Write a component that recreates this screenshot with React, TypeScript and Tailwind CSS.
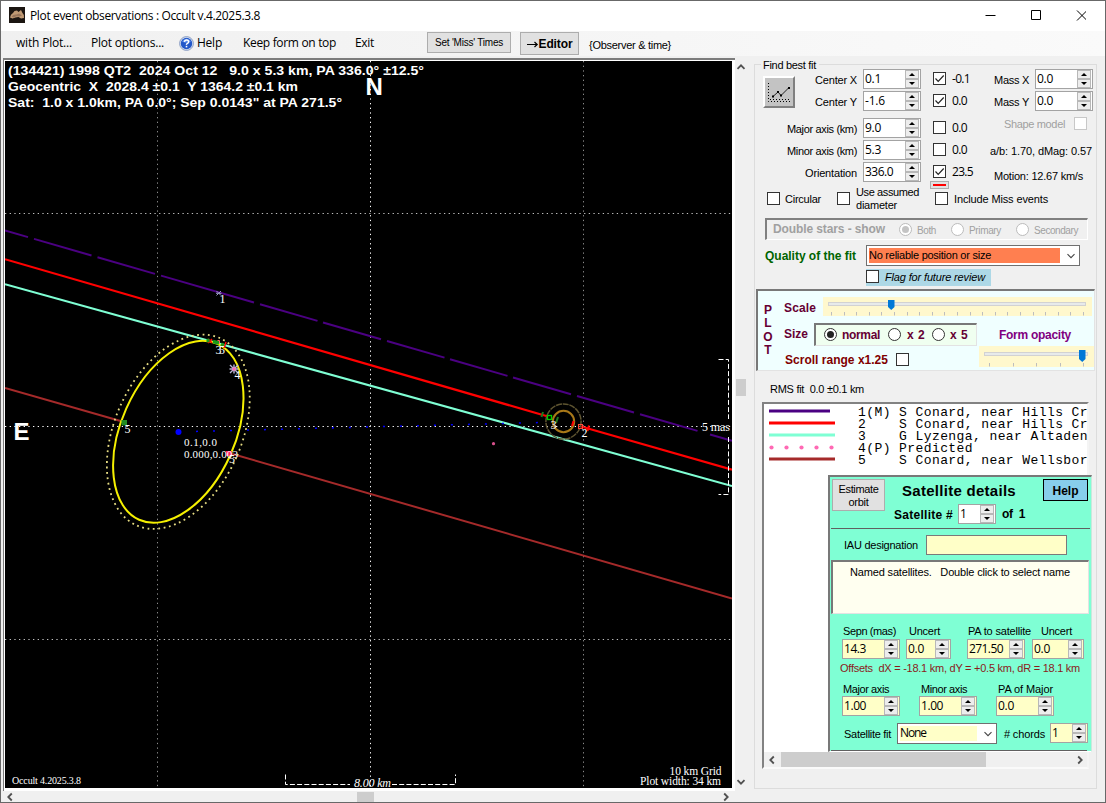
import { useLayoutEffect, useRef, type ReactNode } from "react";

/* Single-line label whose letter spacing is adjusted so it fills its box. */
function Fit({ className = "", small = true, children }: { className?: string; small?: boolean; children: ReactNode }) {
  const box = useRef<HTMLSpanElement>(null);
  const inner = useRef<HTMLSpanElement>(null);
  useLayoutEffect(() => {
    const b = box.current, i = inner.current;
    if (!b || !i) return;
    i.style.letterSpacing = "0px";
    const n = (i.textContent || "").length;
    if (n > 0) i.style.letterSpacing = `${(b.clientWidth - i.getBoundingClientRect().width) / n}px`;
  }, []);
  return (
    <span ref={box} className={`block shrink-0 whitespace-pre leading-[14px] ${small ? "text-[11px]" : ""} ${className}`}>
      <span ref={inner}>{children}</span>
    </span>
  );
}

const UI = "font-['Open_Sans','Noto_Sans',sans-serif]";

function Arrows() {
  return (
    <span className="mr-px flex w-[14px] shrink-0 flex-col">
      {["M3 5h6L6 2z", "M3 2h6L6 5z"].map((d) => (
        <span key={d} className="flex h-[9px] items-center justify-center border border-[#b8b8b8] bg-[#ededed]">
          <svg width="12" height="7" viewBox="0 0 12 7"><path d={d} fill="#000" /></svg>
        </span>
      ))}
    </span>
  );
}

function Spin({ className, value, vw }: { className: string; value: string; vw: string }) {
  return (
    <span className={`flex h-[20px] shrink-0 justify-between border border-[#a3a3a3] ${className}`}>
      <Fit small={false} className={`ml-px mt-[2px] text-[12px] ${UI} ${vw}`}>{value}</Fit>
      <Arrows />
    </span>
  );
}

function Check({ className = "", on, off }: { className?: string; on?: boolean; off?: boolean }) {
  return (
    <span className={`block size-[13px] shrink-0 border bg-white ${off ? "border-[#c8c8c8]" : "border-[#333]"} ${className}`}>
      {on && (
        <svg width="11" height="11" viewBox="0 0 11 11" className="block">
          <path d="M1.5 5.5l2.7 2.8L9.7 2.5" fill="none" stroke="#222" strokeWidth="1.2" />
        </svg>
      )}
    </span>
  );
}

function Radio({ className = "", on, off }: { className?: string; on?: boolean; off?: boolean }) {
  return (
    <span className={`flex size-[13px] shrink-0 items-center justify-center rounded-full border bg-white ${off ? "border-[#bcbcbc]" : "border-[#333]"} ${className}`}>
      {on && <span className={`size-[7px] rounded-full ${off ? "bg-[#c4c4c4]" : "bg-[#222]"}`} />}
    </span>
  );
}

function Chevron({ d, className = "" }: { d: string; className?: string }) {
  return (
    <svg width="10" height="10" viewBox="0 0 10 10" className={`block shrink-0 ${className}`}>
      <path d={d} fill="none" stroke="#505050" strokeWidth="1.8" />
    </svg>
  );
}
const UP = "M1.5 6.8L5 3.3l3.5 3.5";
const DOWN = "M1.5 3.2L5 6.7l3.5-3.5";
const LEFT = "M6.8 1.5L3.3 5l3.5 3.5";
const RIGHT = "M3.2 1.5L6.7 5l-3.5 3.5";

function TrackBar({ className, w, h, ticks, start, step, thumb, y0 }: {
  className: string; w: number; h: number; ticks: number; start: number; step: number; thumb: number; y0: number;
}) {
  return (
    <div className={`shrink-0 bg-[#fff8cd] ${className}`}>
      <svg width={w} height={h} viewBox={`0 0 ${w} ${h}`} className="block">
        <rect x="5.5" y={y0 + 0.5} width={w - 12} height="3" fill="#e7eaea" stroke="#d2d2d2" />
        {Array.from({ length: ticks }, (_, i) => (
          <rect key={i} x={Math.round(start + i * step)} y={h - 4} width="1" height="3.5" fill="#bdbdbd" />
        ))}
        <path d={`M${thumb} ${y0 - 2}h6.500v${h > 19 ? 9 : 7}l-3.250 3l-3.250 -3z`} fill="#0078d7" />
      </svg>
    </div>
  );
}

function TitleBar() {
  return (
    <header className="flex h-[30px] shrink-0 bg-white">
      <svg width="16" height="16" viewBox="0 0 16 16" className="ml-[8px] mt-[6px] block">
        <rect width="16" height="16" fill="#1b1511" />
        <path d="M1 10.500Q1.500 7 4 6L5.500 4l2.500-.5 1.500 1.500 2.500-2 1.500 3Q15.500 7.500 15 11l-3 .5-2.500-1.500-3 .500-3 1z" fill="#c09a74" />
        <path d="M2.500 9.500q2-2.500 5-2l2.500-1 3 2-2.500 1-3-.300-3 1.300z" fill="#98755a" />
      </svg>
      <Fit small={false} className={`ml-[5px] mt-[8px] w-[230px] text-[12px] text-black ${UI}`}>Plot event observations : Occult v.4.2025.3.8</Fit>
      <svg width="106" height="20" viewBox="980 5 106 20" className="ml-[720px] mt-[4px] block" fill="none" stroke="#000" strokeWidth="1">
        <path d="M985.500 15.500h10M1031.500 10.500h9v9h-9zM1077 10.500l10 10M1087 10.500l-10 10" />
      </svg>
    </header>
  );
}

function MenuBar() {
  const m = `mt-[5px] text-[12px] ${UI}`;
  return (
    <nav className="flex h-[25px] shrink-0 bg-gradient-to-r from-[#f0f0f0] to-[#fafafa] text-black">
      <Fit small={false} className={`ml-[15px] w-[56px] ${m}`}>with Plot...</Fit>
      <Fit small={false} className={`ml-[19px] w-[73px] ${m}`}>Plot options...</Fit>
      <svg width="15" height="15" viewBox="0 0 15 15" className="ml-[15px] mt-[5px] block shrink-0">
        <circle cx="7.500" cy="7.500" r="6.900" fill="#dce6f5" stroke="#7f93bc" strokeWidth=".9" />
        <circle cx="7.500" cy="7.500" r="5.700" fill="#2257c8" />
        <path d="M3 5.500A5 5 0 0 1 12 5.500Q7.500 8 3 5.500z" fill="#5a8cea" />
        <path d="M5.400 5.800Q5.600 3.900 7.600 3.900T9.700 5.700Q9.700 6.700 8.500 7.300T7.500 8.900" fill="none" stroke="#fff" strokeWidth="1.500" />
        <rect x="6.700" y="9.800" width="1.600" height="1.600" fill="#fff" />
      </svg>
      <Fit small={false} className={`ml-[3px] w-[25px] ${m}`}>Help</Fit>
      <Fit small={false} className={`ml-[21px] w-[93px] ${m}`}>Keep form on top</Fit>
      <Fit small={false} className={`ml-[19px] w-[19px] ${m}`}>Exit</Fit>
      <button className="ml-[53px] mt-px flex h-[21px] w-[84px] items-start justify-center border border-[#adadad] bg-[#e1e1e1]">
        <Fit small={false} className="mt-[3px] w-[68px] text-left text-[10px]">Set 'Miss' Times</Fit>
      </button>
      <button className="ml-[9px] mt-px flex h-[23px] w-[59px] items-start justify-center border border-[#adadad] bg-[#e1e1e1]">
        <svg width="12" height="9" viewBox="0 0 12 9" className="mt-[7px] block shrink-0" aria-hidden="true">
          <path d="M0 4.500h10M7.500 2l2.700 2.500L7.500 7" fill="none" stroke="#000" strokeWidth="1.200" />
        </svg>
        <Fit small={false} className="mt-[4px] w-[34px] text-left text-[12px] font-bold">Editor</Fit>
      </button>
      <Fit className="ml-[10px] mt-[7px] w-[82px]">{"{Observer & time}"}</Fit>
    </nav>
  );
}

const SLOPE = 0.2893;
function Plot() {
  const serif = "'Liberation Serif', serif";
  const sans = "'Liberation Sans', sans-serif";
  const py = (x: number) => 230.5 + (x - 5) * SLOPE;
  const dashes = [[5, 28], [34, 91.5], [97.5, 155], [161, 254], [260, 317.5], [323, 381], [387, 444.5], [450, 507.5], [513, 571], [577, 634], [640, 697.5], [710, 732]];
  return (
    <svg width="727" height="727" viewBox="5 61 727 727" className="block bg-black">
      <g stroke="#8c8c8c" strokeWidth="1" strokeDasharray="1.300 3.370">
        <path d="M157.500 61V788M583.500 61V788" />
        <path d="M5 213.500H732M5 639.500H732" stroke="#c0c0c0" />
        <path d="M370.500 61V788M5 426.500H732" stroke="#fff" />
      </g>
      <g fill="none">
        <path d={dashes.map(([a, b]) => `M${a} ${py(a)}L${b} ${py(b)}`).join("")} stroke="#4b0082" strokeWidth="2" />
        <path d="M5 259.200L548 416.500M581 426.500L732 469.700" stroke="#f00" strokeWidth="2.200" />
        <path d="M5 284.200L732 486" stroke="#7fffd4" strokeWidth="2.100" />
        <path d="M5 388L124 422M229 453L732 598.500" stroke="#a52a2a" strokeWidth="2" />
        <path d="M196 431.400L553 422.200" stroke="#00f" strokeWidth="1.500" strokeDasharray="2 15" />
      </g>
      <circle cx="178.500" cy="432" r="3" fill="#00f" />
      <g fill="none" transform="rotate(24 178.300 431.800)">
        <ellipse cx="178.300" cy="431.800" rx="57" ry="96.300" stroke="#f5f000" strokeWidth="2" />
        <ellipse cx="178.300" cy="431.800" rx="63.500" ry="102.500" stroke="#e6dc82" strokeWidth="1.800" strokeDasharray="1.800 3.600" />
      </g>
      <circle cx="563.500" cy="421.500" r="10.700" fill="none" stroke="#a87818" strokeWidth="2" />
      <circle cx="563.500" cy="421.500" r="17.600" fill="none" stroke="#5e5430" strokeWidth="1.500" strokeDasharray="6 .8" />
      {/* event markers */}
      <path d="M216.500 291l4.500 4.500M221 291l-4.500 4.500M216 293.300h5.500" stroke="#9a9ac4" strokeWidth="1" />
      <path d="M208 339l4 4M212 339l-4 4M224 348l2-6" stroke="#f00" strokeWidth="1.500" />
      <path d="M206.500 340.500h3M213 341.500l6 1.500M221 344l3 1.500" stroke="#1a9a1a" strokeWidth="3.500" />
      <path d="M217.500 340.500h2v3" stroke="#f66" fill="none" />
      <path d="M230 365l8 8M238 365l-8 8M229.500 369h9M234 364.500v9" stroke="#b8b8d8" strokeWidth="1.400" />
      <rect x="232.500" y="367.500" width="3" height="3" fill="#ff69b4" />
      <rect x="121.500" y="420" width="5.500" height="5.500" fill="#228b22" />
      <rect x="226" y="451" width="6" height="5" fill="#ff2060" />
      <rect x="547.500" y="415.500" width="4" height="4" fill="none" stroke="#0c0" strokeWidth="1.300" />
      <path d="M543 412l-1.500 5M558 417l-2 6" stroke="#1f7a1f" strokeWidth="2" />
      <path d="M573.500 421l-1.500 5M589 425.500l-1.500 5.500" stroke="#f00" strokeWidth="2" />
      <rect x="578.500" y="424.500" width="4" height="4" fill="none" stroke="#ff4a3a" />
      <path d="M586 428.500h4" stroke="#f00" strokeWidth="2" />
      <circle cx="493.500" cy="443.700" r="1.600" fill="#d8508c" />
      {/* scale brackets */}
      <g fill="none" stroke="#fff" strokeDasharray="5 2.200">
        <path d="M285.500 774.500V784.500H350M392 784.500H455.500V774.500" />
        <path d="M718.500 359.500H728.500V419M728.500 437V494.500H718.500" />
      </g>
      <g fill="#fff" fontFamily={serif} fontSize="12">
        <text x="219.500" y="302.500">1</text>
        <text x="215.500" y="354">3</text>
        <text x="219" y="354">5</text>
        <text x="234.500" y="379">4</text>
        <text x="124.500" y="433">5</text>
        <text x="229" y="463">5</text>
        <text x="550.500" y="428.500">3</text>
        <text x="581.500" y="437">2</text>
        <text x="184" y="446" fontSize="11" textLength="33">0.1,0.0</text>
        <text x="184" y="458" fontSize="11" textLength="54">0.000,0.003</text>
        <text x="702" y="431" textLength="28">5 mas</text>
        <text x="12" y="784" fontSize="10" textLength="69">Occult 4.2025.3.8</text>
        <text x="354" y="787" fontStyle="italic" textLength="37">8.00 km</text>
        <text x="669.500" y="775" fontSize="11.500" textLength="52">10 km Grid</text>
        <text x="640" y="785" fontSize="11.500" textLength="81">Plot width: 34 km</text>
      </g>
      <g fill="#fff" fontFamily={sans} fontWeight="bold" fontSize="13">
        <text x="8" y="75" textLength="416" lengthAdjust="spacingAndGlyphs">{"(134421) 1998 QT2\u00a0 2024 Oct 12\u00a0\u00a0 9.0 x 5.3 km, PA 336.0° ±12.5°"}</text>
        <text x="8" y="91" textLength="290" lengthAdjust="spacingAndGlyphs">{"Geocentric\u00a0 X\u00a0 2028.4 ±0.1\u00a0 Y 1364.2 ±0.1 km"}</text>
        <text x="8" y="107" textLength="334" lengthAdjust="spacingAndGlyphs">{"Sat:\u00a0 1.0 x 1.0km, PA 0.0°; Sep 0.0143\" at PA 271.5°"}</text>
      </g>
      <g fill="#fff" fontFamily={sans} fontWeight="bold" fontSize="24">
        <text x="365.500" y="95">N</text>
        <text x="13.500" y="440">E</text>
      </g>
    </svg>
  );
}

function PlotPane() {
  return (
    <div className="ml-[2px] mt-[2px] flex w-[746px] shrink-0 flex-col">
      <div className="flex">
        <div className="h-[733px] w-[732px] shrink-0 border-l border-t-2 border-[#7c7c7c] bg-white pl-px pt-px">
          <Plot />
        </div>
        <div className="flex w-[11px] flex-col items-center bg-[#f0f0f0]">
          <Chevron d={UP} className="mt-[4px]" />
          <div className="mt-[307px] h-[17px] w-[10px] bg-[#cdcdcd]" />
          <Chevron d={DOWN} className="mt-[381px]" />
        </div>
      </div>
      <div className="flex h-[11px] w-[732px] items-center bg-[#f0f0f0]">
        <Chevron d={LEFT} className="ml-[2px]" />
        <div className="ml-[342px] h-[10px] w-[17px] bg-[#cdcdcd]" />
        <Chevron d={RIGHT} className="ml-[347px]" />
      </div>
    </div>
  );
}

function FitSection() {
  const left = [
    ["Center X", "w-[42px]", "0.1", "w-[16px]", ""],
    ["Center Y", "w-[42px]", "-1.6", "w-[20px]", "mt-[2px]"],
    ["Major axis (km)", "w-[70px]", "9.0", "w-[16px]", "mt-[7px]"],
    ["Minor axis (km)", "w-[70px]", "5.3", "w-[16px]", "mt-[2px]"],
    ["Orientation", "w-[52px]", "336.0", "w-[28px]", "mt-[2px]"],
  ];
  const checks: [string, string, boolean, string][] = [
    ["-0.1", "w-[18px]", true, ""],
    ["0.0", "w-[15px]", true, "mt-[2px]"],
    ["0.0", "w-[15px]", false, "mt-[7px]"],
    ["0.0", "w-[15px]", false, "mt-[2px]"],
    ["23.5", "w-[21px]", true, "mt-[2px]"],
  ];
  return (
    <div className="flex h-[112px] shrink-0">
      <button className="ml-[8px] mt-[7px] block size-[32px] shrink-0 border-2 border-b-[#808080] border-l-white border-r-[#808080] border-t-white bg-[#c3c3c3]">
        <svg width="28" height="28" viewBox="0 0 28 28" className="block">
          <path d="M3.500 5V23.500H26M5 21.500H26" fill="none" stroke="#000" strokeDasharray="1 2" />
          <path d="M8 18.500L13 14l3 3.500L24 9.500" fill="none" stroke="#222" />
          <path d="M7 17.500h2v2h-2zM12 13h2v2h-2zM15 16.500h2v2h-2zM23 9h2v2h-2z" fill="#000" />
        </svg>
      </button>
      <div className="flex w-[126px] shrink-0 flex-col">
        {left.map(([l, lw, v, vw, mt]) => (
          <div key={l} className={`flex h-[20px] shrink-0 justify-end ${mt}`}>
            <Fit className={`mr-[6px] mt-[4px] ${lw}`}>{l}</Fit>
            <Spin className="w-[58px] bg-white" value={v} vw={vw} />
          </div>
        ))}
      </div>
      <div className="ml-[12px] flex w-[44px] shrink-0 flex-col">
        {checks.map(([v, w, on, mt], i) => (
          <div key={i} className={`flex h-[20px] shrink-0 ${mt}`}>
            <Check on={on} className="mt-[3px]" />
            <Fit small={false} className={`ml-[6px] mt-[3px] text-[12px] ${UI} ${w}`}>{v}</Fit>
          </div>
        ))}
      </div>
      <div className="flex w-[116px] shrink-0 flex-col">
        {["Mass X", "Mass Y"].map((l, i) => (
          <div key={l} className={`flex h-[20px] shrink-0 justify-end ${i ? "mt-[2px]" : ""}`}>
            <Fit className="mr-[6px] mt-[4px] w-[35px]">{l}</Fit>
            <Spin className="w-[58px] bg-white" value="0.0" vw="w-[16px]" />
          </div>
        ))}
        <div className="mt-[6px] flex h-[23px] shrink-0">
          <Fit className="ml-[27px] w-[61px] text-[#a0a0a0]">Shape model</Fit>
          <Check off className="ml-[9px]" />
        </div>
        <Fit className="ml-[13px] mt-[4px] w-[102px]">a/b: 1.70, dMag: 0.57</Fit>
        <Fit className="ml-[17px] mt-[11px] w-[89px]">Motion: 12.67 km/s</Fit>
      </div>
    </div>
  );
}

function Options() {
  return (
    <>
      <div className="flex h-[37px] shrink-0">
        <Check className="ml-[12px] mt-[11px]" />
        <Fit className="ml-[5px] mt-[11px] w-[36px]">Circular</Fit>
        <Check className="ml-[16px] mt-[11px]" />
        <div className="ml-[6px] mt-[4px] w-[63px] shrink-0">
          <Fit className="w-[63px]">Use assumed</Fit>
          <Fit className="-mt-px w-[41px]">diameter</Fit>
        </div>
        <div className="ml-[11px] shrink-0">
          <div className="flex h-[8px] w-[19px] items-center justify-center border border-[#adadad] bg-[#e1e1e1]">
            <span className="h-[2px] w-[13px] bg-[#f00]" />
          </div>
          <div className="ml-[5px] mt-[3px] flex">
            <Check />
            <Fit className="ml-[6px] w-[94px]">Include Miss events</Fit>
          </div>
        </div>
      </div>
      <div className="ml-[10px] flex h-[22px] w-[323px] shrink-0 border-b border-l-2 border-r border-t-2 border-b-white border-l-[#808080] border-r-white border-t-[#808080] text-[#a0a0a0]">
        <Fit small={false} className="ml-[6px] mt-[2px] w-[112px] text-[12px] font-bold">Double stars - show</Fit>
        <Radio on off className="ml-[14px] mt-[3px]" />
        <Fit small={false} className="ml-[5px] mt-[4px] w-[19px] text-[10px]">Both</Fit>
        <Radio off className="ml-[15px] mt-[3px]" />
        <Fit small={false} className="ml-[5px] mt-[4px] w-[32px] text-[10px]">Primary</Fit>
        <Radio off className="ml-[15px] mt-[3px]" />
        <Fit small={false} className="ml-[5px] mt-[4px] w-[44px] text-[10px]">Secondary</Fit>
      </div>
      <div className="flex h-[29px] shrink-0">
        <Fit small={false} className="ml-[10px] mt-[9px] w-[91px] text-[12px] font-bold text-[#006400]">Quality of the fit</Fit>
        <div className="ml-[10px] mt-[5px] flex h-[21px] w-[214px] shrink-0 items-center border border-[#707070] bg-white pl-[2px]">
          <div className="h-[15px] w-[191px] bg-[#ff7f50]">
            <Fit className="w-[122px]">No reliable position or size</Fit>
          </div>
          <svg width="10" height="10" viewBox="0 0 10 10" className="ml-[6px]"><path d={DOWN} fill="none" stroke="#444" strokeWidth="1.100" /></svg>
        </div>
      </div>
      <div className="ml-[111px] flex h-[17px] w-[125px] shrink-0 bg-[#add8e6]">
        <Check className="mt-px" />
        <Fit className="ml-[6px] mt-px w-[100px] italic">Flag for future review</Fit>
      </div>
    </>
  );
}

function PlotControls() {
  const b = "text-[12px] font-bold text-[#660033]";
  return (
    <div className="ml-px mt-[3px] flex h-[82px] w-[339px] shrink-0 border-b border-l-2 border-r border-t-2 border-b-[#e3e3e3] border-l-[#787878] border-r-[#e3e3e3] border-t-[#787878] bg-[#f0ffff]">
      <div className={`ml-[5px] mt-[13px] flex w-[10px] shrink-0 flex-col items-center leading-[13.300px] ${b}`}>
        <span>P</span><span>L</span><span>O</span><span>T</span>
      </div>
      <div className="ml-[11px] flex shrink-0 flex-col">
        <div className="flex h-[27px]">
          <Fit small={false} className={`mt-[10px] w-[32px] ${b}`}>Scale</Fit>
          <TrackBar className="ml-[7px] mt-[6px] h-[19px]" w={269} h={19} ticks={21} start={8} step={12.6} thumb={65} y0={5} />
        </div>
        <div className="flex h-[28px]">
          <Fit small={false} className={`mt-[9px] w-[24px] ${b}`}>Size</Fit>
          <div className="ml-[6px] mt-[5px] flex h-[23px] w-[163px] shrink-0 border-b border-l-2 border-r border-t-2 border-b-[#e3e3e3] border-l-[#787878] border-r-[#e3e3e3] border-t-[#787878] bg-[#f0fff0]">
            <Radio on className="ml-[8px] mt-[3px]" />
            <Fit small={false} className={`ml-[5px] mt-[3px] w-[38px] ${b}`}>normal</Fit>
            <Radio className="ml-[8px] mt-[3px]" />
            <Fit small={false} className={`ml-[6px] mt-[3px] w-[18px] ${b}`}>x 2</Fit>
            <Radio className="ml-[7px] mt-[3px]" />
            <Fit small={false} className={`ml-[5px] mt-[3px] w-[18px] ${b}`}>x 5</Fit>
          </div>
          <Fit small={false} className="ml-[22px] mt-[10px] w-[72px] text-[12px] font-bold text-[#800080]">Form opacity</Fit>
        </div>
        <div className="flex">
          <Fit small={false} className="ml-px mt-[7px] w-[103px] text-[12px] font-bold text-[#800000]">Scroll range x1.25</Fit>
          <Check className="ml-[8px] mt-[7px]" />
          <TrackBar className="ml-[70px] h-[21px]" w={115} h={21} ticks={5} start={10} step={23.5} thumb={100} y0={6} />
        </div>
      </div>
    </div>
  );
}

function Satellite() {
  const s = "bg-[#ffffc8]";
  return (
    <div className="ml-[64px] mt-[9px] flex h-[277px] w-[264px] shrink-0 flex-col border-b border-l-2 border-r border-t-2 border-b-white border-l-[#787878] border-r-[#c8e8dc] border-t-[#787878] bg-[#7fffd4]">
      <div className="flex h-[51px] shrink-0">
        <button className="ml-[2px] mt-[2px] flex h-[32px] w-[53px] shrink-0 flex-col items-center border border-[#adadad] bg-[#e1e1e1] pt-[2px]">
          <Fit className="w-[40px] text-left">Estimate</Fit>
          <Fit className="-mt-px w-[20px] text-left">orbit</Fit>
        </button>
        <div className="flex w-[158px] shrink-0 flex-col">
          <Fit small={false} className="ml-[17px] mt-[7px] w-[114px] text-[15px] font-bold">Satellite details</Fit>
          <div className="mt-[6px] flex">
            <Fit small={false} className="ml-[9px] mt-[4px] w-[59px] text-[12px] font-bold">Satellite #</Fit>
            <Spin className="ml-[5px] w-[38px] bg-white" value="1" vw="w-[7px]" />
            <Fit small={false} className="ml-[6px] mt-[3px] w-[23px] text-[12px] font-bold">of  1</Fit>
          </div>
        </div>
        <button className="mt-[2px] flex h-[22px] w-[45px] shrink-0 justify-center border border-black bg-[#87ceeb] pt-[4px]">
          <Fit small={false} className="w-[26px] text-left text-[12px] font-bold">Help</Fit>
        </button>
      </div>
      <div className="ml-px h-px w-[259px] shrink-0 bg-[#606060]" />
      <div className="flex h-[31px] shrink-0">
        <Fit className="ml-[14px] mt-[9px] w-[74px]">IAU designation</Fit>
        <div className={`ml-[8px] mt-[6px] h-[20px] w-[141px] border border-[#7a7a7a] ${s}`} />
      </div>
      <div className="ml-px h-[54px] w-[258px] shrink-0 border-b border-l-2 border-r border-t-2 border-b-[#e3e3e3] border-l-[#787878] border-r-[#e3e3e3] border-t-[#787878] bg-[#fffff0]">
        <Fit className="ml-[17px] mt-[3px] w-[220px]">Named satellites.   Double click to select name</Fit>
      </div>
      <div className="mt-[10px] flex shrink-0">
        <Fit className="ml-[13px] w-[53px]">Sepn (mas)</Fit>
        <Fit className="ml-[13px] w-[31px]">Uncert</Fit>
        <Fit className="ml-[28px] w-[63px]">PA to satellite</Fit>
        <Fit className="ml-[10px] w-[31px]">Uncert</Fit>
      </div>
      <div className="mt-px flex shrink-0">
        <Spin className={`ml-[12px] w-[58px] ${s}`} value="14.3" vw="w-[22px]" />
        <Spin className={`ml-[6px] w-[45px] ${s}`} value="0.0" vw="w-[16px]" />
        <Spin className={`ml-[16px] w-[58px] ${s}`} value="271.50" vw="w-[34px]" />
        <Spin className={`ml-[7px] w-[52px] ${s}`} value="0.0" vw="w-[16px]" />
      </div>
      <Fit className="ml-[10px] mt-[2px] w-[240px] text-[#8b1a1a]">Offsets  dX = -18.1 km, dY = +0.5 km, dR = 18.1 km</Fit>
      <div className="mt-[7px] flex shrink-0">
        <Fit className="ml-[13px] w-[46px]">Major axis</Fit>
        <Fit className="ml-[32px] w-[46px]">Minor axis</Fit>
        <Fit className="ml-[31px] w-[55px]">PA of Major</Fit>
      </div>
      <div className="flex shrink-0">
        <Spin className={`ml-[12px] w-[58px] ${s}`} value="1.00" vw="w-[22px]" />
        <Spin className={`ml-[19px] w-[58px] ${s}`} value="1.00" vw="w-[22px]" />
        <Spin className={`ml-[19px] w-[58px] ${s}`} value="0.0" vw="w-[16px]" />
      </div>
      <div className="flex h-[34px] shrink-0">
        <Fit className="ml-[14px] mt-[11px] w-[47px]">Satellite fit</Fit>
        <div className="ml-[6px] mt-[7px] flex h-[21px] w-[100px] shrink-0 items-center border border-[#707070] bg-white pl-[2px]">
          <div className={`h-[15px] w-[77px] ${s}`}>
            <Fit small={false} className={`w-[26px] text-[12px] ${UI}`}>None</Fit>
          </div>
          <svg width="10" height="10" viewBox="0 0 10 10" className="ml-[6px]"><path d={DOWN} fill="none" stroke="#444" strokeWidth="1.100" /></svg>
        </div>
        <Fit className="ml-[7px] mt-[11px] w-[41px]"># chords</Fit>
        <Spin className={`ml-[5px] mt-[7px] w-[38px] ${s}`} value="1" vw="w-[7px]" />
      </div>
      <div className="ml-px h-px w-[256px] shrink-0 bg-[#606060]" />
    </div>
  );
}

function ObserverList() {
  const rows: [string, string, string][] = [
    ["#4b0082", "1(M) S Conard, near Hills Cr", "w-[230px]"],
    ["#ff0000", "2    S Conard, near Hills Cr", "w-[230px]"],
    ["#7fffd4", "3    G Lyzenga, near Altaden", "w-[230px]"],
    ["#ff69b4", "4(P) Predicted", "w-[115px]"],
    ["#a52a2a", "5    S Conard, near Wellsbor", "w-[230px]"],
  ];
  return (
    <div className="ml-[7px] flex h-[367px] w-[327px] shrink-0 flex-col border-2 border-b-[#fafafa] border-l-[#828282] border-r-[#f4f4f4] border-t-[#828282] bg-white">
      <div className="mt-[2px] shrink-0">
        {rows.map(([c, t, w], i) => (
          <div key={i} className="flex h-[12px]">
            <svg width="66" height="12" viewBox="0 0 66 12" className="ml-[5px] block shrink-0">
              {i === 3
                ? [2.5, 17.5, 32.5, 47.5, 62.5].map((x) => <circle key={x} cx={x} cy="5.500" r="2.100" fill={c} />)
                : <path d={`M0 5H${i === 0 ? 61 : 66}`} stroke={c} strokeWidth="2.800" />}
            </svg>
            <Fit small={false} className={`ml-[23px] font-['Liberation_Mono',monospace] text-[13px] ${w}`}>{t}</Fit>
          </div>
        ))}
      </div>
      <Satellite />
      <div className="flex h-[15px] shrink-0 items-center bg-[#f0f0f0]">
        <Chevron d={LEFT} className="ml-[3px]" />
        <div className="ml-[4px] h-[15px] w-[205px] bg-[#cdcdcd]" />
        <Chevron d={RIGHT} className="ml-[89px]" />
      </div>
    </div>
  );
}

export default function App() {
  return (
    <div className="flex h-[803px] w-[1106px] flex-col overflow-hidden border border-[#686868] bg-[#f0f0f0] font-['Liberation_Sans',Arial,sans-serif] text-black">
      <TitleBar />
      <MenuBar />
      <main className="flex">
        <PlotPane />
        <section className="ml-[5px] mt-[8px] flex h-[725px] w-[343px] shrink-0 flex-col border border-[#dcdcdc]">
          <div className="-mt-[7px] ml-[6px] h-[11px] w-[58px] shrink-0 bg-[#f0f0f0] pl-[2px]">
            <Fit className="w-[53px]">Find best fit</Fit>
          </div>
          <FitSection />
          <Options />
          <PlotControls />
          <div className="h-[31px] shrink-0">
            <Fit className="ml-[15px] mt-[11px] w-[94px]">RMS fit  0.0 ±0.1 km</Fit>
          </div>
          <ObserverList />
        </section>
      </main>
    </div>
  );
}
